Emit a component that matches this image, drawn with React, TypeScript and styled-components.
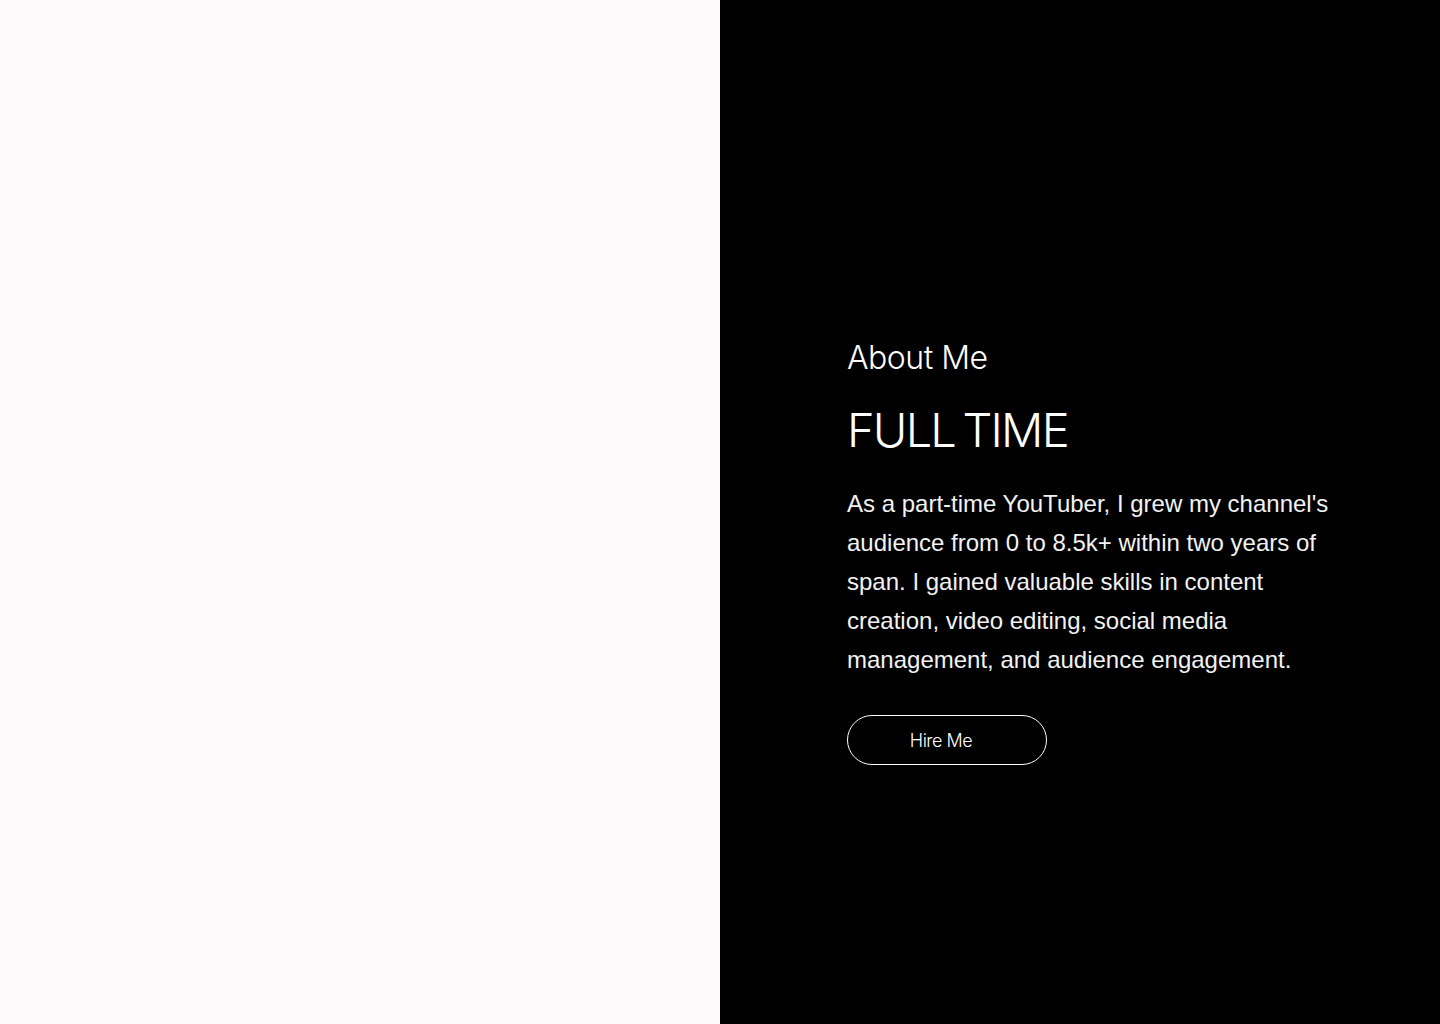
import React from "react";
import styled, { createGlobalStyle } from "styled-components";

const Global = createGlobalStyle`
  html, body { margin: 0; padding: 0; }
  body { background: #000; }
  * { box-sizing: border-box; }
`;

const Page = styled.div`
  display: grid;
  grid-template-columns: 720px 720px;
  width: 1440px;
  height: 1024px;
`;

const LeftPanel = styled.div`
  background: #fcfafa;
`;

const RightPanel = styled.section`
  background: #000;
  color: #fff;
  display: flex;
  flex-direction: column;
  align-items: flex-start;
  padding: 336px 0 0 127px;
`;

const Eyebrow = styled.h2`
  margin: 0;
  font-family: Inter, "Noto Sans", sans-serif;
  font-weight: 300;
  font-size: 32px;
  line-height: 44px;
  letter-spacing: -0.5px;
`;

const Title = styled.h1`
  margin: 22px 0 0;
  font-family: Inter, "Noto Sans", sans-serif;
  font-weight: 300;
  font-size: 47px;
  line-height: 56px;
  letter-spacing: -1.8px;
  word-spacing: -4px;
`;

const Body = styled.p`
  margin: 26px 0 0;
  width: 496px;
  font-family: "Liberation Sans", Arial, sans-serif;
  font-weight: 400;
  font-size: 24px;
  line-height: 39px;
  color: #f2f2f2;
`;

const HireButton = styled.button`
  margin-top: 36px;
  width: 200px;
  height: 50px;
  border: 1px solid #fff;
  border-radius: 25px;
  background: transparent;
  color: #fff;
  font-family: Inter, "Noto Sans", sans-serif;
  font-weight: 300;
  font-size: 18px;
  letter-spacing: -0.5px;
  padding: 0 12px 0 0;
  cursor: pointer;
`;

export default function App() {
  return (
    <>
      <Global />
      <Page>
        <LeftPanel />
        <RightPanel>
          <Eyebrow>About Me</Eyebrow>
          <Title>FULL TIME</Title>
          <Body>
            As a part-time YouTuber, I grew my channel's audience from 0 to 8.5k+ within two years of
            span. I gained valuable skills in content creation, video editing, social media
            management, and audience engagement.
          </Body>
          <HireButton>Hire Me</HireButton>
        </RightPanel>
      </Page>
    </>
  );
}
